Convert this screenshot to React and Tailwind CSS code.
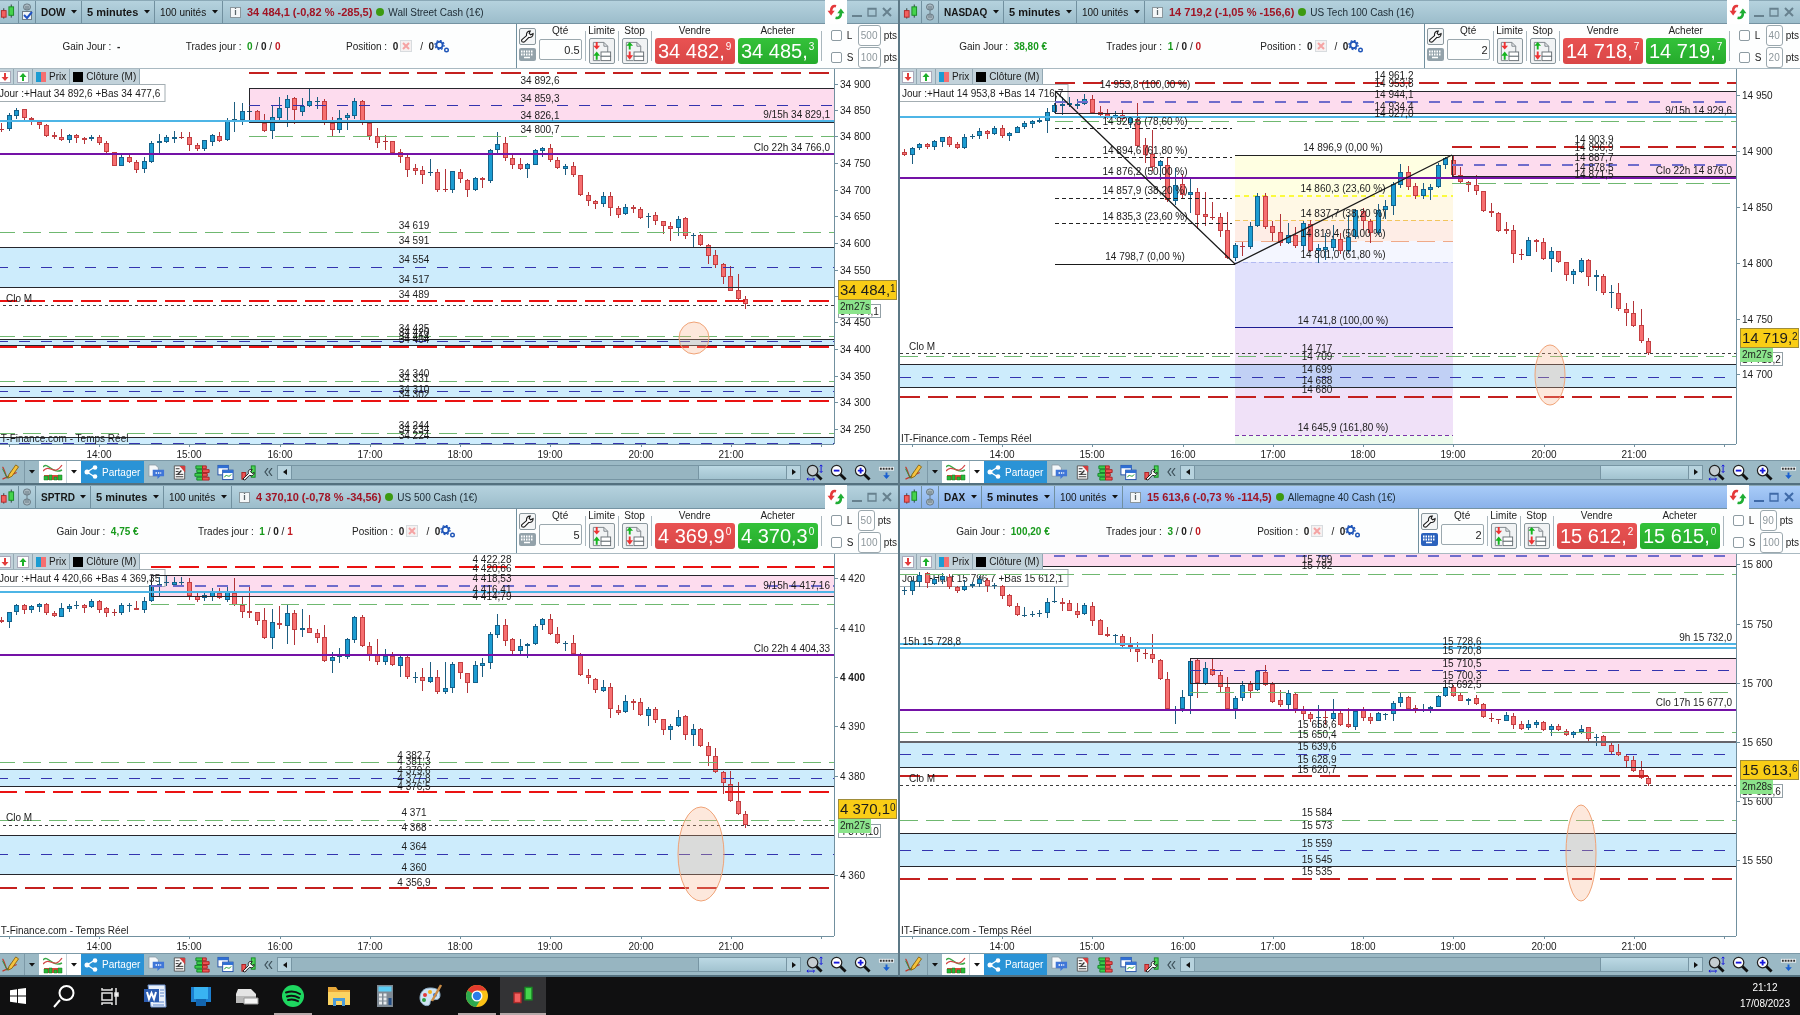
import React from 'react';
import { clsx } from 'clsx';

const STEP = 7.52;
const HOUR = 90.25;

// One entry per 5 minute bar: direction (u/d) then high, body top, body bottom, low
const DOW_BARS = `d54,60,61,63 u44,46,60,62 u39,41,47,50 d40,40,49,52 d48,49,51,56 d52,53,56,60 d55,56,67,68 d63,66,68,70 d60,68,71,72 u65,66,71,74
d65,66,69,74 d68,69,71,75 u66,68,70,72 d66,68,74,76 d72,74,83,84 d83,83,97,97 u86,88,97,97 d86,88,93,94 d91,93,101,104 u88,92,100,104
u72,74,93,94 u65,72,74,84 u66,68,73,74 u62,68,70,74 d63,68,69,70 d63,68,76,82 d74,76,80,82 u71,71,80,82 u65,66,73,77 d63,67,72,73
u49,52,71,72 u33,50,51,63 u34,42,51,56 u42,42,43,43 d41,42,52,54 d45,54,62,63 u37,48,62,70 u28,39,49,51 u26,30,39,58 d28,29,41,55
u29,37,43,47 u19,32,37,38 u28,32,33,40 d30,32,52,56 d48,54,61,67 u41,49,61,64 u44,46,49,61 u29,32,47,50 d31,32,54,56 d51,54,67,71
d59,67,74,79 d66,72,73,81 d72,72,84,85 d80,83,88,94 d86,88,101,108 d95,99,102,106 d97,101,106,115 u90,103,104,107 d100,103,121,123 d100,120,121,123
u102,102,121,124 d100,103,110,114 d110,111,121,128 u108,109,121,122 d108,109,111,119 u80,81,112,114 u63,75,81,84 d68,74,89,92 d85,89,96,100 d89,95,100,101
u94,95,100,109 u80,81,96,96 u78,79,82,88 d75,79,91,93 d88,91,99,100 u95,97,100,106 d93,97,106,108 d106,106,126,127 d123,126,132,137 d131,132,135,140
u123,127,135,138 d123,127,139,147 d137,139,146,149 u135,138,145,146 d136,138,140,144 d138,140,149,150 u144,147,148,159 d143,146,152,156 d152,152,157,165 d153,157,160,172
u147,150,159,167 d148,149,167,170 u164,166,167,178 d165,166,176,177 d175,176,187,195 d181,186,196,199 d194,195,208,215 d197,207,222,222 d205,221,230,233 d227,230,235,240`;

const SP_BARS = `d63,66,68,69 u58,58,68,74 u50,51,58,61 d50,51,56,60 u51,52,56,59 u49,50,53,58 d49,50,59,61 d57,59,62,63 u49,54,63,63 u50,52,55,58
u47,51,52,55 d50,51,54,59 u45,47,53,54 d46,47,56,59 d53,54,59,63 d55,58,59,62 u49,51,59,61 u49,51,52,58 d47,54,56,56 u43,47,56,59
u21,31,47,48 u23,30,31,42 u22,28,29,32 u23,28,31,33 u23,28,29,31 d24,28,42,46 d39,42,46,48 u39,41,44,47 u34,38,43,47 d34,39,44,45
u33,38,46,48 d24,39,51,52 d42,51,58,64 d33,57,59,64 d58,58,67,71 d54,66,84,85 u55,68,84,95 d52,69,71,75 u51,59,72,90 d56,59,76,91
u55,74,76,83 d61,74,79,79 d75,79,84,89 d71,83,107,108 u98,103,107,119 u94,102,103,109 u84,85,103,105 u62,63,86,89 d61,63,92,93 d88,92,101,107
d85,101,108,111 u95,102,108,111 d98,102,111,112 u102,103,112,123 d102,103,123,125 u118,123,124,129 d114,123,127,137 u108,123,128,129 d116,123,138,140 u108,134,138,140
u108,110,134,139 d108,108,119,125 d119,119,129,139 u107,111,129,129 u104,109,112,123 u78,80,109,115 u60,71,81,84 d65,71,87,92 d84,85,97,100 u85,92,97,100
u89,90,92,104 u70,72,90,91 u64,65,71,76 d60,65,80,81 d73,80,89,90 u87,89,90,97 d81,89,100,100 d99,100,121,122 d115,121,124,130 d124,125,136,139
u126,133,137,138 d129,133,155,164 d151,156,159,161 u141,147,158,159 d145,147,149,156 d144,148,161,162 u153,155,162,172 d153,155,166,169 d165,165,176,181 u170,172,176,186
u156,163,172,173 d161,162,181,186 u170,175,181,192 d174,175,192,193 d188,192,202,212 d194,202,218,219 d217,218,229,240 d217,230,247,248 d228,247,260,261 d257,260,271,274`;

const NASDAQ_BARS = `d80,83,86,87 u78,79,86,95 u74,75,79,81 d74,75,78,80 u71,72,78,81 u68,68,73,78 d67,68,76,78 d73,75,79,80 u65,68,79,80 u65,67,68,70
u59,62,67,70 d61,62,65,70 u57,59,65,66 d56,59,67,69 u63,64,67,72 u57,58,64,64 u52,54,58,60 u51,52,55,59 u48,51,53,54 u39,43,52,64
u34,36,43,44 u28,35,37,46 u28,34,36,38 u30,35,37,40 u25,30,35,36 d26,30,44,45 d37,43,46,48 d40,45,48,50 u42,46,49,50 d41,46,50,53
u47,48,54,59 d34,50,77,78 d69,76,86,94 d61,85,98,102 u91,92,97,111 d88,96,131,133 u99,116,132,136 d105,115,126,130 u109,123,126,144 d119,123,146,160
d123,145,148,157 d133,148,149,151 d144,148,162,168 d143,161,189,190 u174,176,189,192 d173,177,178,187 u153,157,178,180 u124,127,157,158 d124,127,158,160 d152,157,164,172
d145,163,174,177 u154,166,174,175 d158,166,177,179 u152,154,177,182 d151,155,182,183 u175,179,182,194 u164,178,181,191 u156,170,179,182 d164,170,182,185 u146,168,182,184
u140,141,168,170 d139,142,152,161 d150,152,164,174 u135,141,164,166 u131,137,141,150 u113,115,137,146 u95,103,116,119 d97,103,118,121 d114,117,127,130 u114,120,127,130
u115,118,121,131 u94,96,118,119 u88,89,96,100 d86,91,106,109 d98,106,113,114 d112,113,116,123 d106,116,122,126 d122,122,142,143 d134,142,144,148 d143,144,162,163
d153,160,162,165 d156,161,185,194 d180,185,186,191 u168,171,187,187 d170,171,173,183 d169,173,190,191 u178,182,190,203 d182,182,193,194 d193,193,206,212 u200,202,206,215
u189,191,203,204 d190,191,208,217 u201,206,208,222 d205,207,224,226 u216,223,224,239 d214,224,240,242 d234,240,244,257 d232,244,257,258 d240,256,272,274 d269,272,284,286`;

const DAX_BARS = `u33,36,37,41 u26,27,37,41 u18,21,28,33 d18,19,29,34 u23,25,30,31 u19,22,26,30 d20,23,33,35 d32,33,37,39 u26,32,36,37 u28,30,32,34
u22,25,30,33 d24,26,32,38 u29,31,32,35 d31,32,42,45 d40,41,52,53 d49,52,61,62 u53,61,62,63 u57,60,61,63 u56,59,60,63 u44,48,59,64
u33,47,48,49 d44,48,50,57 d46,49,57,57 d49,57,61,64 u49,51,60,61 d48,52,67,72 d65,66,81,81 d73,80,82,83 u80,81,82,89 d80,82,92,94
d83,91,93,98 d88,95,98,108 d95,99,100,105 d80,100,105,109 d105,106,125,126 d118,125,155,156 u152,156,156,170 u136,143,155,158 u106,107,142,160 d105,106,129,144
u108,114,130,131 d105,115,121,122 d118,121,133,138 d123,133,155,155 u142,144,155,165 u127,131,144,147 d127,130,137,144 u116,117,136,137 d111,118,131,132 d128,130,148,149
d136,146,151,153 u136,139,151,157 d138,140,155,159 d152,156,160,166 d158,160,165,168 u151,163,164,174 d156,163,164,171 u145,159,165,167 d156,159,171,172 d154,170,173,174
u157,157,173,176 d153,156,164,167 d159,163,167,170 u158,159,167,167 u159,160,161,166 u147,149,160,167 u138,143,149,153 d142,143,155,157 d151,154,155,159 u150,155,156,158
u152,153,155,159 u141,142,153,153 u133,133,142,143 d131,133,142,143 d139,141,147,147 u144,145,147,151 d141,144,150,151 d149,150,163,164 d159,164,165,168 d165,165,166,170
u158,161,167,167 d159,162,171,175 d167,170,175,176 u166,170,174,176 u166,168,171,174 d167,168,176,177 u170,172,176,182 d170,172,176,177 d175,177,181,182 u177,178,181,184
u171,175,178,180 d173,173,185,187 u180,183,184,192 d181,182,192,192 d189,191,198,200 d190,198,201,202 d201,202,207,213 d202,206,217,218 d207,216,224,225 d222,224,230,232`;

const LINE = {
  red: { stroke: '#c4201f', strokeWidth: 2, strokeDasharray: '20 8' },
  hot: { stroke: '#ea1212', strokeWidth: 2, strokeDasharray: '20 8' },
  green: { stroke: '#6fb870', strokeWidth: 1, strokeDasharray: '18 8' },
  mid: { stroke: '#3434ae', strokeWidth: 1, strokeDasharray: '11 11' },
  midThick: { stroke: '#6f6ccb', strokeWidth: 2, strokeDasharray: '11 11' },
  black: { stroke: '#26262c', strokeWidth: 1 },
  grey: { stroke: '#65656b', strokeWidth: 2 },
  sky: { stroke: '#4eb5e6', strokeWidth: 2 },
  purple: { stroke: '#7412a6', strokeWidth: 2 },
  dots: { stroke: '#3c3c3c', strokeWidth: 1, strokeDasharray: '3 3' },
  fib: { stroke: '#222', strokeWidth: 1, strokeDasharray: '4 3' },
};

const PINK = '#fddcee';
const BLUE = '#cdecfc';

const WINDOWS = [
  {
    symbol: 'DOW', last: '34 484,1 (-0,82 % -285,5)', name: 'Wall Street Cash (1€)', linked: true,
    gain: '-', trades: [0, 0, 0], qty: '0.5', sell: ['34 482,', '9'], buy: ['34 485,', '3'],
    limit: '500', stop: '100', bars: DOW_BARS, height: 375,
    day: 'Jour :+Haut 34 892,6 +Bas 34 477,6',
    zones: [[252, 19, 53, PINK], [0, 178, 218, BLUE], [0, 270, 276, BLUE], [0, 317, 328, BLUE], [0, 368, 375, BLUE]],
    boxes: [[252, 19, 53]],
    lines: [['red', 4, 252], ['mid', 36, 252], ['green', 67, 252], ['sky', 52], ['purple', 85], ['green', 163],
      ['black', 178], ['mid', 198], ['black', 218], ['hot', 232], ['dots', 236], ['green', 267], ['black', 270], ['mid', 272],
      ['hot', 278], ['black', 276], ['green', 312], ['black', 317], ['mid', 322], ['black', 328], ['hot', 332], ['green', 364],
      ['black', 368], ['mid', 374]],
    labels: [[543, 11, '34 892,6'], [543, 29, '34 859,3'], [543, 46, '34 826,1'], [543, 60, '34 800,7'],
      [417, 156, '34 619'], [417, 171, '34 591'], [417, 190, '34 554'], [417, 210, '34 517'], [417, 225, '34 489'],
      [417, 259, '34 425'], [417, 263, '34 420'], [417, 267, '34 414'], [417, 270, '34 404'],
      [417, 304, '34 340'], [417, 309, '34 331'], [417, 320, '34 310'], [417, 325, '34 302'],
      [417, 356, '34 244'], [417, 360, '34 234'], [417, 366, '34 224']],
    edge: [[45, '9/15h 34 829,1'], [78, 'Clo 22h 34 766,0']],
    closeY: 229,
    scale: [['34 900', 15], ['34 850', 41], ['34 800', 67], ['34 750', 94], ['34 700', 121], ['34 650', 147], ['34 600', 174],
      ['34 550', 201], ['', 227], ['34 450', 253], ['34 400', 280], ['34 350', 307], ['34 300', 333], ['34 250', 360]],
    tag: ['34 484,', '1', 221], timer: ['2m27s', 238], closeTag: ['34 484,1', 242],
    target: [697, 269, 15, 16],
  },
  {
    symbol: 'NASDAQ', last: '14 719,2 (-1,05 % -156,6)', name: 'US Tech 100 Cash (1€)',
    gain: '38,80 €', trades: [1, 0, 0], qty: '2', sell: ['14 718,', '7'], buy: ['14 719,', '7'],
    limit: '40', stop: '20', bars: NASDAQ_BARS, height: 375,
    day: 'Jour :+Haut 14 953,8 +Bas 14 716,7',
    zones: [[155, 22, 44, PINK], [552, 86, 107, PINK], [0, 295, 318, BLUE]],
    boxes: [[155, 22, 44], [552, 86, 107]],
    fib: true,
    lines: [['red', 14, 155], ['midThick', 33, 155], ['green', 52, 155], ['sky', 48], ['red', 78, 552], ['midThick', 96, 552],
      ['green', 114, 552], ['purple', 109], ['dots', 284], ['green', 287], ['black', 295], ['mid', 308], ['black', 318], ['red', 328]],
    labels: [[494, 6, '14 961,2'], [494, 14, '14 953,8'], [494, 25, '14 944,1'], [494, 37, '14 934,4'], [494, 44, '14 927,0'],
      [694, 70, '14 903,9'], [694, 78, '14 896,9'], [694, 88, '14 887,7'], [694, 98, '14 878,5'], [694, 105, '14 871,5'],
      [245, 15, '14 953,8 (100,00 %)'], [245, 52, '14 920,6 (78,60 %)'], [245, 81, '14 894,6 (61,80 %)'],
      [245, 102, '14 876,2 (50,00 %)'], [245, 121, '14 857,9 (38,20 %)'], [245, 147, '14 835,3 (23,60 %)'], [245, 187, '14 798,7 (0,00 %)'],
      [443, 78, '14 896,9 (0,00 %)'], [443, 119, '14 860,3 (23,60 %)'], [443, 144, '14 837,7 (38,20 %)'], [443, 164, '14 819,4 (50,00 %)'],
      [443, 185, '14 801,0 (61,80 %)'], [443, 251, '14 741,8 (100,00 %)'], [443, 358, '14 645,9 (161,80 %)'],
      [417, 279, '14 717'], [417, 287, '14 709'], [417, 300, '14 699'], [417, 311, '14 688'], [417, 320, '14 680']],
    edge: [[41, '9/15h 14 929,6'], [101, 'Clo 22h 14 876,0']],
    closeY: 277,
    scale: [['14 950', 26], ['14 900', 82], ['14 850', 138], ['14 800', 194], ['14 750', 250], ['14 700', 305]],
    tag: ['14 719,', '2', 269], timer: ['2m27s', 286], closeTag: ['14 719,2', 290],
    target: [650, 306, 15, 30],
  },
  {
    symbol: 'SPTRD', last: '4 370,10 (-0,78 % -34,56)', name: 'US 500 Cash (1€)',
    gain: '4,75 €', trades: [1, 0, 1], qty: '5', sell: ['4 369,9', '0'], buy: ['4 370,3', '0'],
    limit: '50', stop: '100', bars: SP_BARS, height: 382,
    day: 'Jour :+Haut 4 420,66 +Bas 4 369,35',
    zones: [[154, 21, 42, PINK], [0, 215, 232, BLUE], [0, 281, 320, BLUE]],
    boxes: [[154, 21, 42]],
    lines: [['hot', 13, 154], ['midThick', 32, 154], ['green', 50, 154], ['sky', 38], ['purple', 101], ['green', 208],
      ['black', 215], ['mid', 224], ['black', 232], ['hot', 238], ['green', 266], ['dots', 271], ['black', 281], ['mid', 300],
      ['black', 320], ['red', 334]],
    labels: [[495, 5, '4 422,28'], [495, 14, '4 420,66'], [495, 24, '4 418,53'], [495, 35, '4 416,41'], [495, 42, '4 414,79'],
      [417, 201, '4 382,7'], [417, 207, '4 381,3'], [417, 216, '4 379,6'], [417, 224, '4 377,8'], [417, 232, '4 376,5'],
      [417, 258, '4 371'], [417, 273, '4 368'], [417, 292, '4 364'], [417, 313, '4 360'], [417, 328, '4 356,9']],
    edge: [[31, '9/15h 4 417,16'], [94, 'Clo 22h 4 404,33']],
    closeY: 263,
    scale: [['4 420', 24], ['4 410', 74], ['4 400', 123], ['4 390', 172], ['4 380', 222], ['4 360', 321]],
    tag: ['4 370,1', '0', 255], timer: ['2m27s', 272], closeTag: ['4 370,10', 277],
    target: [704, 300, 23, 47],
  },
  {
    symbol: 'DAX', last: '15 613,6 (-0,73 % -114,5)', name: 'Allemagne 40 Cash (1€)', active: true,
    gain: '100,20 €', trades: [3, 0, 0], qty: '2', sell: ['15 612,', '2'], buy: ['15 615,', '0'],
    limit: '90', stop: '100', bars: DAX_BARS, height: 382,
    day: 'Jour :+Haut 15 796,7 +Bas 15 612,1',
    zones: [[0, 0, 12, PINK], [290, 104, 129, PINK], [0, 188, 213, BLUE], [0, 279, 312, BLUE]],
    boxes: [[290, 104, 129]],
    lines: [['midThick', 2], ['black', 12], ['green', 20], ['sky', 90], ['sky', 94], ['mid', 116, 290], ['green', 138, 290],
      ['purple', 156], ['green', 178], ['grey', 188], ['mid', 200], ['black', 213], ['red', 222], ['dots', 231], ['green', 266],
      ['black', 279], ['mid', 296], ['black', 312], ['red', 325]],
    labels: [[417, 5, '15 799'], [417, 11, '15 792'], [562, 87, '15 728,6'], [562, 96, '15 720,8'], [562, 109, '15 710,5'],
      [562, 121, '15 700,3'], [562, 130, '15 692,5'], [417, 170, '15 658,6'], [417, 180, '15 650,4'], [417, 192, '15 639,6'],
      [417, 205, '15 628,9'], [417, 215, '15 620,7'], [417, 258, '15 584'], [417, 271, '15 573'], [417, 289, '15 559'],
      [417, 305, '15 545'], [417, 317, '15 535'], [32, 87, '15h 15 728,8']],
    edge: [[83, '9h 15 732,0'], [148, 'Clo 17h 15 677,0']],
    closeY: 224,
    scale: [['15 800', 10], ['15 750', 70], ['15 700', 129], ['15 650', 188], ['15 600', 247], ['15 550', 306]],
    tag: ['15 613,', '6', 216], timer: ['2m28s', 233], closeTag: ['15 613,6', 237],
    target: [681, 299, 15, 48],
  },
];

const FIB_BANDS = [
  [86, 127, '#ffffe2'], [127, 151, '#fff8e5'], [151, 172, '#feede6'], [172, 193, '#f4f6ff'],
  [193, 258, '#e1e1fc'], [258, 366, '#f0e1f8'], [366, 375, '#edfbed'],
];

const CandleIcon = ({ className }) => (
  <svg viewBox="0 0 16 16" className={className}>
    <path d="M4 4v11M12 0v14" stroke="#2c3a35" />
    <rect x="1.5" y="6.500" width="5" height="7" fill="#f2605f" stroke="#b12a2a" />
    <rect x="9.500" y="2.500" width="5" height="9" fill="#45d34c" stroke="#188a24" />
  </svg>
);

const Caret = () => (
  <svg viewBox="0 0 6 4" className="w-[6px] h-[4px] shrink-0"><path d="M0 0h6L3 3.500z" fill="#111" /></svg>
);

const LinkIcon = ({ linked }) => (
  <svg viewBox="0 0 12 18" className="w-3 h-[18px]" fill="none" stroke="#6b7c86">
    <rect x="2.500" y="1" width="7" height="6" rx="3" fill="#a9b8c0" />
    <path d="M5 3v4M7 3v4" />
    {linked ? (
      <>
        <rect x="1.500" y="8.500" width="9" height="8" fill="#eef4f8" />
        <path d="M3 12l3 3 5-6" stroke="#2053c4" strokeWidth="2" />
      </>
    ) : (
      <>
        <rect x="2.500" y="11" width="7" height="6" rx="3" fill="#a9b8c0" />
        <path d="M5 11v4M7 11v4M6 7v4" />
      </>
    )}
  </svg>
);

const WrenchIcon = () => (
  <svg viewBox="0 0 14 14" className="w-[13px] h-[13px]">
    <path d="M2 13a1.600 1.600 0 0 1-1-2.600L6 6C5.500 3 7.500 1 10 1.200L8.800 3.600l1.600 1.600L13 4c.2 2.500-1.800 4.400-4.500 4L4 12.500A2 2 0 0 1 2 13z" fill="#fff" stroke="#1c1c1c" strokeWidth="1.200" />
  </svg>
);

const OrderIcon = ({ flip }) => (
  <svg viewBox="0 0 24 24" className="w-[23px] h-[23px]" fill="none">
    <path d="M3.500 2.500h11l4 4v10M14.500 2.500v4h4M3.500 2.500v19h7" stroke="#7d858a" />
    <rect x="11.500" y="12.500" width="10" height="4.500" fill="#fff" stroke="#6a7277" />
    <rect x="11.500" y="17" width="10" height="4.500" fill="#fff" stroke="#6a7277" />
    <path d={flip ? 'M6 10V6H3.500L7 2l3.500 4H8v4z' : 'M6 2v4H3.500L7 10l3.500-4H8V2z'} fill={flip ? '#15b51e' : '#e33'} />
    <path d={flip ? 'M6 12v4H3.500L7 20.500l3.500-4.500H8v-4z' : 'M6 20.500v-4H3.500L7 12l3.500 4.500H8v4z'} fill={flip ? '#e33' : '#15b51e'} />
  </svg>
);

const RefreshIcon = () => (
  <svg viewBox="0 0 20 18" className="w-[18px] h-4" fill="none">
    <path d="M10 2.500C6.500 1.500 4.500 4 4.500 8" stroke="#e5393b" strokeWidth="3" />
    <path d="M.5 7.500h8l-4 5.500z" fill="#e5393b" />
    <path d="M9.500 15.500c4 1 6-1.500 6-5.500" stroke="#1fae34" strokeWidth="3" />
    <path d="M11.500 10.500h8l-4-5.500z" fill="#1fae34" />
  </svg>
);

const GearsIcon = () => (
  <svg viewBox="0 0 16 13" className="w-4 h-[13px]" fill="none" stroke="#1f55b8">
    <circle cx="5.500" cy="5" r="3.200" strokeWidth="2" />
    <circle cx="5.500" cy="5" r="4.600" strokeWidth="1.200" strokeDasharray="1.800 1.800" />
    <circle cx="12.500" cy="10" r="1.800" strokeWidth="1.400" />
  </svg>
);

const Picker = ({ label, value, className }) => (
  <label className="h-full flex items-center gap-[5px] pl-[5px] pr-1 border-r border-[#71909f]">
    <select aria-label={label} className={clsx('appearance-none bg-transparent outline-none text-[#161616]', className)}>
      <option>{value}</option>
    </select>
    <Caret />
  </label>
);

const TitleBar = ({ win }) => (
  <div
    className={clsx(
      'h-6 flex items-center border-y border-t-[#8ba9b7] border-b-[#7593a2] bg-gradient-to-b',
      win.active ? 'from-[#a9ccf8] to-[#8ab2ea]' : 'from-[#b5d2de] to-[#9cbdcb]'
    )}
  >
    <span className="w-[22px] h-full flex items-center justify-center border-r border-[#71909f]"><CandleIcon className="w-[15px] h-4" /></span>
    <button aria-label="Lier" className="w-[17px] h-full flex items-center justify-center border-r border-[#71909f]"><LinkIcon linked={win.linked} /></button>
    <Picker label="Valeur" value={win.symbol} className="font-bold" />
    <Picker label="Unité de temps" value="5 minutes" className="font-bold text-[11px]" />
    <Picker label="Historique" value="100 unités" />
    <span className="ml-[7px] mr-[6px] w-[11px] h-[11px] bg-[#f4f7f8] border border-[#8b979d] text-[#5b666b] text-[9px] leading-[9px] font-bold text-center">i</span>
    <span className="font-bold text-[11px] text-[#a01424] whitespace-nowrap">{win.last}</span>
    <span className="mx-1 w-2 h-2 rounded-full bg-[#3c9a10]" />
    <span className="text-[#1c2a33] whitespace-nowrap">{win.name}</span>
    <div className="ml-auto h-6 flex items-center">
      <button aria-label="Actualiser" className="w-[22px] h-6 bg-white flex items-center justify-center"><RefreshIcon /></button>
      <div className={clsx('flex items-center gap-[5px] pl-[5px] pr-[6px]', win.active ? 'text-[#3f6aa8]' : 'text-[#67818e]')}>
        <button aria-label="Réduire"><svg viewBox="0 0 10 10" className="size-[10px]"><path d="M0 9h10" stroke="currentColor" strokeWidth="2" /></svg></button>
        <button aria-label="Agrandir"><svg viewBox="0 0 10 10" className="size-[10px]"><path d="M1 1.500h8v7.500H1zM1 2h8" fill="none" stroke="currentColor" strokeWidth="1.300" /></svg></button>
        <button aria-label="Fermer"><svg viewBox="0 0 10 10" className="size-[10px]"><path d="M1 1l8 8M9 1L1 9" stroke="currentColor" strokeWidth="2" /></svg></button>
      </div>
    </div>
  </div>
);

const Divider = () => <span className="w-px h-[30px] mt-[7px] bg-[#aab7be]" />;

const PriceButton = ({ label, price, className }) => (
  <div className="flex flex-col items-center">
    <span className="h-[14px] leading-[14px]">{label}</span>
    <button className={clsx('w-20 h-[26px] rounded-[3px] text-white text-[20px] leading-[26px] flex justify-center', className)}>
      {price[0]}<sup className="text-[10px] leading-[18px] top-0 ml-px">{price[1]}</sup>
    </button>
  </div>
);

const Protection = ({ letter, value }) => (
  <div className="flex items-center gap-[5px]">
    <label className="flex items-center gap-[5px]">
      <input type="checkbox" className="appearance-none size-[11px] border border-[#8d9ba2] rounded-[2px] bg-white" />
      <span className="w-[6px]">{letter}</span>
    </label>
    <input
      aria-label={`${letter} points`}
      defaultValue={value}
      className={clsx('h-[21px] border border-[#9ba8ae] rounded-[3px] text-center text-[#8d979c] bg-white', value.length > 2 ? 'w-[23px]' : 'w-[17px]')}
    />
    <span className="-ml-[2px]">pts</span>
  </div>
);

const TradeBar = ({ win }) => {
  const [won, flat, lost] = win.trades;
  return (
    <div className="h-[45px] flex border-b border-[#a9b9c1] bg-[#fdfefe] text-[#222]">
      <div className="flex-1 flex items-center justify-evenly py-2 whitespace-nowrap">
        <span>Gain Jour : &nbsp;<b className={win.gain === '-' ? '' : 'text-[#189a1c]'}>{win.gain}</b></span>
        <span>
          Trades jour : &nbsp;<b className="text-[#189a1c]">{won}</b> / <b>{flat}</b> / <b className="text-[#c01a22]">{lost}</b>
        </span>
        <span className="flex items-center">
          Position : &nbsp;<b>0</b>
          <button aria-label="Fermer position" className="mx-[2px] size-[12px] border border-[#d8dcdf] bg-[#f5f1f1] flex items-center justify-center">
            <svg viewBox="0 0 8 8" className="size-2"><path d="M1 1l6 6M7 1L1 7" stroke="#f5a3a3" strokeWidth="2" /></svg>
          </button>
          <span className="ml-[6px]">/ &nbsp;<b>0</b></span>
          <GearsIcon />
        </span>
      </div>
      <div className="flex gap-[3px] pl-[2px] pr-px border-l border-[#71909f]">
        <div className="flex flex-col gap-[3px] pt-1">
          <button aria-label="Réglages" className="size-[17px] border border-[#8a979d] rounded-[2px] bg-[#f4f6f7] flex items-center justify-center"><WrenchIcon /></button>
          <button aria-label="Clavier" className={clsx('w-[17px] h-[13px] rounded-[2px] flex items-center justify-center', win.active ? 'bg-[#2b62bd]' : 'bg-[#93a2aa]')}>
            <svg viewBox="0 0 14 9" className="w-[14px] h-[9px]"><path d="M1 1.500h12M1 4.500h12" stroke="#fff" strokeWidth="2" strokeDasharray="1.500 1" /><path d="M4 7.500h6" stroke="#fff" strokeWidth="1.500" /></svg>
          </button>
        </div>
        <label className="flex flex-col items-center">
          <span className="h-[15px] leading-[14px]">Qté</span>
          <input defaultValue={win.qty} className="w-[43px] h-[21px] border border-[#9ba8ae] rounded-[2px] text-right pr-px text-[11px]" />
        </label>
        <Divider />
        <div className="flex flex-col items-center w-[26px]">
          <span className="h-[14px] leading-[14px]">Limite</span>
          <button aria-label="Ordre limite" className="size-[26px] border border-[#8a979d] rounded-[2px] bg-[#f1f3f4] flex items-center justify-center"><OrderIcon /></button>
        </div>
        <Divider />
        <div className="flex flex-col items-center w-[26px]">
          <span className="h-[14px] leading-[14px]">Stop</span>
          <button aria-label="Ordre stop" className="size-[26px] border border-[#8a979d] rounded-[2px] bg-[#f1f3f4] flex items-center justify-center"><OrderIcon flip /></button>
        </div>
        <Divider />
        <PriceButton label="Vendre" price={win.sell} className="bg-gradient-to-b from-[#e95252] to-[#d94747]" />
        <PriceButton label="Acheter" price={win.buy} className="bg-gradient-to-b from-[#34c23a] to-[#25ab2c]" />
        <Divider />
        <div className="pl-[6px] pt-px flex flex-col gap-px">
          <Protection letter="L" value={win.limit} />
          <Protection letter="S" value={win.stop} />
        </div>
      </div>
    </div>
  );
};

const Fibonacci = () => (
  <g>
    {FIB_BANDS.map(([top, bottom, fill]) => (
      <rect key={top} x="335" y={top} width="218" height={bottom - top} fill={fill} />
    ))}
    <g strokeWidth="1">
      <path d="M335 86.500h218" stroke="#222" />
      <path d="M335 127h218" stroke="#fbfb3c" strokeWidth="2" strokeDasharray="5 4" />
      <path d="M335 151.500h218" stroke="#f2c55c" strokeDasharray="5 3" />
      <path d="M335 172.500h218" stroke="#efa988" strokeDasharray="18 8" />
      <path d="M335 193.500h218" stroke="#b3baf2" strokeDasharray="5 3" />
      <path d="M335 258.500h218" stroke="#1c1c92" />
      <path d="M335 366.500h218" stroke="#7a35a8" strokeDasharray="4 3" />
    </g>
  </g>
);

const FibLines = () => (
  <g fill="none">
    <path d="M155 59.500h177M155 88.500h177M155 129.500h177M155 154.500h177" {...LINE.fib} />
    <path d="M155 195.500h180" stroke="#1a1a1a" />
    <path d="M155 22l180 173 217-109" stroke="#1a1a1a" strokeWidth="1.300" />
  </g>
);

const Candles = ({ bars }) => (
  <g>
    {bars.split(/\s+/).map((bar, i) => {
      const up = bar[0] === 'u';
      const [high, top, bottom, low] = bar.slice(1).split(',').map(Number);
      const x = Math.round(2 + i * STEP);
      return (
        <g key={i}>
          <rect x={x + 2} y={high} width="1" height={Math.max(low - high, 1)} fill={up ? '#1d5d80' : '#b23338'} />
          {bottom - top < 2 ? (
            <rect x={x} y={top} width="5" height="1" fill={up ? '#1d5d80' : '#b23338'} />
          ) : (
            <rect x={x + 0.5} y={top + 0.5} width="4" height={bottom - top - 1} fill={up ? '#1c9cd2' : '#f66f70'} stroke={up ? '#14618a' : '#c43f42'} />
          )}
        </g>
      );
    })}
  </g>
);

const Plot = ({ win }) => {
  const { height } = win;
  const [cx, cy, rx, ry] = win.target;
  return (
    <svg className="flex-1 min-w-0 block" height={height + (height > 380 ? 17 : 16)} fontSize="10" fill="#1c1c1c">
      {win.zones.map(([x, top, bottom, fill]) => (
        fill === PINK && <rect key={top} x={x} y={top} width="100%" height={bottom - top} fill={fill} />
      ))}
      {win.fib && <Fibonacci />}
      {win.zones.map(([x, top, bottom, fill]) => (
        fill === BLUE && <rect key={top} x={x} y={top} width="100%" height={bottom - top} fill={fill} className="mix-blend-multiply" />
      ))}
      <rect x="-1" y="15.500" width="169" height="17" fill="#fff" stroke="#a3adb2" />
      <text x="2" y="28">{win.day}</text>
      <Candles bars={win.bars} />
      {win.boxes.map(([x, top, bottom]) => (
        <rect key={top} x={x + 0.5} y={top + 0.5} width="100%" height={bottom - top} fill="none" stroke="#26262c" />
      ))}
      {win.lines.map(([kind, y, x = 0]) => {
        const at = LINE[kind].strokeWidth === 1 ? y + 0.5 : y;
        return <line key={kind + y} x1={x} x2="100%" y1={at} y2={at} {...LINE[kind]} />;
      })}
      {win.fib && <FibLines />}
      <ellipse cx={cx} cy={cy} rx={rx} ry={ry} fill="#f7b48c" fillOpacity="0.3" stroke="#f0a377" />
      <g textAnchor="middle">
        {win.labels.map(([x, y, text]) => <text key={x + text} x={x} y={y + 4}>{text}</text>)}
      </g>
      <svg x="100%" overflow="visible">
        {win.edge.map(([y, text]) => <text key={text} x="-4" y={y + 4} textAnchor="end">{text}</text>)}
      </svg>
      <text x="9" y={win.closeY + 4}>Clo M</text>
      <text x="1" y={height - 2}>IT-Finance.com - Temps Réel</text>
      <rect y={height} width="100%" height="20" fill="#fff" />
      <line x1="0" x2="100%" y1={height + 0.5} y2={height + 0.5} stroke="#71909f" />
      {[-1, 0, 1, 2, 3, 4, 5, 6, 7, 8].map((h) => {
        const x = Math.round(102 + h * HOUR);
        return (
          <g key={h}>
            <line x1={x + 0.5} x2={x + 0.5} y1={height} y2={height + 3} stroke="#71909f" />
            {h >= 0 && h < 8 && <text x={x} y={height + 14} textAnchor="middle">{14 + h}:00</text>}
          </g>
        );
      })}
    </svg>
  );
};

const PriceScale = ({ win }) => {
  const [price, digit, y] = win.tag;
  const [timer, timerY] = win.timer;
  const [closing, closingY] = win.closeTag;
  return (
    <svg className="w-16 shrink-0 block" height={win.height + 16} fontSize="10" fill="#1c1c1c">
      <line x1="0.500" x2="0.500" y1="0" y2={win.height} stroke="#71909f" />
      {win.scale.map(([text, at]) => (
        <g key={at}>
          <line x1="0" x2="4" y1={at + 0.5} y2={at + 0.5} stroke="#71909f" />
          <text x="6" y={at + 4} fontWeight={text === '4 400' ? 'bold' : 'normal'}>{text}</text>
        </g>
      ))}
      <rect x="4.500" y={closingY - 6.5} width="42" height="13" fill="#fff" stroke="#93a0a6" />
      <text x="6" y={closingY + 4}>{closing}</text>
      <rect x="4.500" y={y - 9.5} width="58" height="19" fill="#f9cd16" stroke="#a08d3a" />
      <text x="6" y={y + 5} fontSize="15">{price}</text>
      <text x="56" y={y + 2} fontSize="10">{digit}</text>
      <rect x="4" y={timerY - 7} width="33" height="14" fill="#8be48b" />
      <text x="6" y={timerY + 3}>{timer}</text>
    </svg>
  );
};

const Legend = () => (
  <div className="absolute top-0 left-0 h-4 flex items-stretch bg-[#c2d2da] text-[#1c1c1c] border-b border-[#9fb2bc]">
    <button aria-label="Réduire le graphique" className="w-[17px] flex items-center justify-center border-r border-[#93a8b3]">
      <svg viewBox="0 0 12 12" className="size-3"><rect x=".5" y=".5" width="11" height="11" fill="#fff" stroke="#aab" /><path d="M5 2h2v4h2.500L6 10 2.500 6H5z" fill="#e23b3b" /></svg>
    </button>
    <button aria-label="Agrandir le graphique" className="w-[19px] flex items-center justify-center border-r border-[#93a8b3]">
      <svg viewBox="0 0 12 12" className="size-3"><rect x=".5" y=".5" width="11" height="11" fill="#fff" stroke="#aab" /><path d="M5 10h2V6h2.500L6 2 2.500 6H5z" fill="#1eb02a" /></svg>
    </button>
    <button className="px-[3px] flex items-center gap-[3px] border-r border-[#93a8b3]">
      <span className="w-[5px] h-[10px] bg-[#1c9cd2]" /><span className="-ml-[3px] w-[5px] h-[10px] bg-[#f66f70]" />Prix
    </button>
    <button className="px-[3px] flex items-center gap-[3px] border-r border-[#93a8b3]">
      <span className="size-[10px] bg-black" />Clôture (M)
    </button>
  </div>
);

const Magnifier = ({ sign }) => (
  <svg viewBox="0 0 18 18" className="size-[17px]" fill="none">
    <path d="M10.500 10.500l6 6" stroke="#111" strokeWidth="3" />
    <circle cx="7" cy="7" r="5.500" fill={sign ? '#fff' : '#c4ccd0'} stroke="#222" strokeWidth="1.300" />
    {sign === 'minus' && <path d="M4 7h6" stroke="#1717dd" strokeWidth="2" />}
    {sign === 'plus' && <path d="M4 7h6M7 4v6" stroke="#1717dd" strokeWidth="2" />}
    {!sign && <path d="M16 1v8M14.500 2.500L16 1l1.500 1.500M14.500 7.500L16 9l1.500-1.500M1 16h8M2.500 14.500L1 16l1.500 1.500M7.500 14.500L9 16l-1.500 1.500" stroke="#1717dd" />}
  </svg>
);

const tools = [
  ['Commentaires', (
    <>
      <path d="M1 1h7l3 3v9H1z" fill="#f5f8fa" stroke="#8ea0aa" />
      <path d="M5 6h12v7h-4l-3 3v-3H5z" fill="#3f76d8" />
      <path d="M8 9.500h6" stroke="#fff" strokeWidth="1.500" strokeDasharray="1.500 1" />
    </>
  )],
  ['Notes', (
    <>
      <path d="M3.500 2h11v14h-11z" fill="#f8f8f8" stroke="#555" />
      <path d="M5 5h4M5 8h3M5 11h8M5 13.500h8" stroke="#333" />
      <path d="M9 2h6v7z" fill="#d43d3d" />
      <path d="M7 11l4-4" stroke="#333" strokeWidth="1.500" />
    </>
  )],
  ['Carnet', (
    <>
      <path d="M2 2h7v3H2zM3 6h6v3H3zM1 10h8v3H1zM3 14h6v3H3z" fill="#3ed04c" stroke="#14872a" />
      <path d="M9 2h4v3H9zM9 6h7v3H9zM9 10h5v3H9zM9 14h7v3H9z" fill="#f05454" stroke="#a22" />
    </>
  )],
  ['Fenêtres', (
    <>
      <rect x="1" y="1.500" width="11" height="10" fill="#fff" stroke="#2351a8" />
      <path d="M1 3h11" stroke="#2f6fd4" strokeWidth="3" />
      <rect x="6" y="6.500" width="11" height="10" fill="#fff" stroke="#2351a8" />
      <path d="M6 8h11" stroke="#2f6fd4" strokeWidth="3" />
      <path d="M8 14c2-5 4 2 7-3" fill="none" stroke="#1c9a30" />
    </>
  )],
  ['Options', (
    <>
      <rect x="12" y="2" width="4" height="12" fill="#4bd554" stroke="#168a24" />
      <rect x="2" y="9" width="4" height="7" fill="#f05454" stroke="#a22" />
      <path d="M3 16l6-6c-1-3 1-5 4-4l-2 2 2 2 2-1c0 3-2 4-5 3l-5 5z" fill="#fff" stroke="#111" />
    </>
  )],
];

const Toolbar = ({ tall }) => (
  <div className={clsx('flex items-center bg-[#9bb9c5] border-t border-[#7c99a7] border-b-2 border-b-[#54717f]', tall ? 'h-[25px]' : 'h-6')}>
    <button aria-label="Dessiner" className="w-7 h-full flex items-center justify-center border-r border-[#7c99a7]">
      <svg viewBox="0 0 20 18" className="w-[20px] h-[17px]" fill="none">
        <path d="M1 3c2 2 3 8 5 12M1 16L16 9" stroke="#c33a2c" strokeWidth="1.300" />
        <path d="M1 5l5 10 4-7" stroke="#2c8c3c" />
        <path d="M7 15l1-4 7-10 3 2-7 10z" fill="#f6c33c" stroke="#8d6714" />
      </svg>
    </button>
    <button aria-label="Outils de dessin" className="w-[14px] h-full flex items-center justify-center"><Caret /></button>
    <button aria-label="Indicateurs" className="w-7 h-full bg-white flex items-center justify-center border-r border-[#c6d2d8]">
      <svg viewBox="0 0 20 18" className="w-[20px] h-[18px]" fill="none">
        <path d="M0 4C5-2 9 12 19 7" stroke="#3aa848" strokeWidth="1.400" />
        <path d="M0 8c7-8 11 6 19-6" stroke="#d24545" strokeWidth="1.200" />
        <path d="M1 12h18v5H1z" fill="#e04a3a" />
        <path d="M1 13h4v4H1zM6 12h3v5H6zM11 14h3v3h-3zM15 12h4v5h-4z" fill="#29b936" stroke="#167524" strokeWidth=".5" />
      </svg>
    </button>
    <button aria-label="Liste des indicateurs" className="w-[14px] h-full bg-white flex items-center justify-center"><Caret /></button>
    <button className="h-full w-[63px] bg-[#2a93d6] text-white flex items-center gap-1 pl-[3px]">
      <svg viewBox="0 0 14 14" className="size-[14px]"><path d="M11 2L3 7l8 5" stroke="#fff" fill="none" strokeWidth="1.300" /><circle cx="11" cy="2.500" r="2.300" fill="#fff" /><circle cx="3" cy="7" r="2.500" fill="#fff" /><circle cx="11" cy="11.500" r="2.300" fill="#fff" /></svg>
      Partager
    </button>
    <div className="flex items-center gap-[6px] pl-1">
      {tools.map(([label, art]) => (
        <button key={label} aria-label={label}><svg viewBox="0 0 18 18" className="size-[17px]" fill="none">{art}</svg></button>
      ))}
    </div>
    <button aria-label="Replier" className="ml-[7px] mr-1 text-[#3c4f59]">
      <svg viewBox="0 0 9 8" className="w-[9px] h-2"><path d="M4 0L1 4l3 4M8 0L5 4l3 4" fill="none" stroke="currentColor" strokeWidth="1.200" /></svg>
    </button>
    <div className="flex-1 h-[15px] flex border border-[#7795a3] bg-[#97b5c1]">
      <button aria-label="Défiler à gauche" className="w-[14px] bg-[#b7d3de] border-r border-[#7795a3] flex items-center justify-center">
        <svg viewBox="0 0 4 6" className="w-1 h-[6px]"><path d="M4 0v6L0 3z" fill="#111" /></svg>
      </button>
      <span className="ml-auto w-[88px] border-l border-[#7795a3] bg-gradient-to-b from-[#bcd9e4] to-[#a2c3d0]" />
      <button aria-label="Défiler à droite" className="w-[14px] bg-[#b7d3de] border-l border-[#7795a3] flex items-center justify-center">
        <svg viewBox="0 0 4 6" className="w-1 h-[6px]"><path d="M0 0v6l4-3z" fill="#111" /></svg>
      </button>
    </div>
    <div className="flex items-center gap-[7px] pl-[5px] pr-[3px]">
      <button aria-label="Ajuster"><Magnifier /></button>
      <button aria-label="Zoom arrière"><Magnifier sign="minus" /></button>
      <button aria-label="Zoom avant"><Magnifier sign="plus" /></button>
      <button aria-label="Clavier virtuel">
        <svg viewBox="0 0 18 18" className="size-[17px]"><path d="M1 3h16v4H1z" fill="#eef3f5" /><path d="M2 5h14" stroke="#333" strokeWidth="2" strokeDasharray="2 1" /><path d="M8 9h2v3h2.500L9 16l-3.500-4H8z" fill="#1a5fd0" /></svg>
      </button>
    </div>
  </div>
);

const ChartWindow = ({ win, left }) => (
  <section className={clsx('min-w-0 bg-white', left && 'border-r-2 border-[#5c7886]')}>
    <TitleBar win={win} />
    <TradeBar win={win} />
    <div className="relative flex">
      <Plot win={win} />
      <PriceScale win={win} />
      <Legend />
    </div>
    <Toolbar tall={win.height < 380} />
  </section>
);

const apps = [
  ['Rechercher', <path d="M3 23l6-7M8.500 9a7 7 0 1 0 14 0 7 7 0 1 0-14 0z" fill="none" stroke="#fff" strokeWidth="2" />],
  ['Vue des tâches', (
    <g fill="none" stroke="#e6e6e6" strokeWidth="1.500">
      <rect x="5" y="9" width="10" height="7" /><path d="M5 4v2h10V4M5 21v-2h10v2M19 4v17" /><path d="M18 9h3v3h-3z" fill="#fff" />
    </g>
  )],
  ['Word', (
    <>
      <path d="M5 1h17l1 22H8z" fill="#e9f0fa" stroke="#6f93cf" />
      <path d="M17 6h4M17 9h4M17 12h4M10 18h11M10 21h11" stroke="#5c85cc" />
      <rect x="1" y="5" width="15" height="13" fill="#2c5cb0" />
      <path d="M4 8l2 7 2.500-6 2.500 6 2-7" fill="none" stroke="#fff" strokeWidth="2" />
    </>
  )],
  ['Bureau', (
    <>
      <path d="M2 3h20v15H2z" fill="#1c7fd0" /><path d="M5 3h14v12H5z" fill="#39b3f2" /><path d="M7 15h10v7H7z" fill="#1365ae" />
    </>
  )],
  ['Imprimante', (
    <>
      <path d="M3 5h13l5 5v9H1v-9z" fill="#e4e4e4" /><path d="M1 12h20v7H1z" fill="#b9b9b9" /><path d="M9 14h14v6H9z" fill="#f5f5f5" stroke="#999" />
    </>
  )],
  ['Spotify', (
    <>
      <circle cx="12" cy="12" r="11" fill="#1ed760" />
      <path d="M5 8.500c5-1.500 10-1 14 1.500M6 12.500c4-1.300 8-.8 12 1.300M7 16c3.500-1 7-.5 10 1.200" fill="none" stroke="#111" strokeWidth="2" strokeLinecap="round" />
    </>
  ), true],
  ['Explorateur', (
    <>
      <path d="M1 3h8l2 3h12v15H1z" fill="#e9a93a" /><path d="M1 8h22v13H1z" fill="#fcd462" /><path d="M6 22v-8h12v8h-3v-5H9v5z" fill="#4b9bd8" />
    </>
  )],
  ['Calculatrice', (
    <>
      <rect x="4" y="1" width="16" height="22" fill="#7f8a94" /><rect x="5.500" y="2.500" width="13" height="5" fill="#5ccdf5" />
      <path d="M6 11h9M6 15h9M6 19h9" stroke="#e8ebee" strokeWidth="3" strokeDasharray="3 1.500" /><path d="M15.500 14h3v7h-3z" fill="#224d86" />
    </>
  )],
  ['Paint', (
    <>
      <path d="M11 4C4 4 1 9 1 14c0 6 6 9 9 7 2-1 0-4 3-5s8 1 8-5-5-7-10-7z" fill="#cfe4f4" stroke="#8fb2cc" />
      <circle cx="6" cy="11" r="2" fill="#e23b3b" /><circle cx="11" cy="8" r="2" fill="#f3b21a" /><circle cx="5" cy="16" r="2" fill="#2f9e44" /><circle cx="16" cy="11" r="2" fill="#2f6fd4" />
      <path d="M22 1l-9 16" stroke="#c98b45" strokeWidth="2.500" />
    </>
  )],
  ['Chrome', (
    <>
      <circle cx="12" cy="12" r="11" fill="#fbc116" />
      <path d="M12 12L2.500 6.500A11 11 0 0 1 21.500 6.500H12z" fill="#e33b2e" />
      <path d="M12 12L2.500 6.500A11 11 0 0 0 11 23l5.500-9z" fill="#2da94f" />
      <circle cx="12" cy="12" r="5.500" fill="#fff" /><circle cx="12" cy="12" r="4.200" fill="#2b7de9" />
    </>
  ), true],
];

const Taskbar = () => (
  <footer className="h-[38px] flex items-stretch bg-[#101011] text-white">
    <button aria-label="Démarrer" className="w-10 pr-1 flex items-center justify-center">
      <svg viewBox="0 0 16 16" className="size-4" fill="#fff"><path d="M0 2.300l7-1v6.200H0zM8 1.100L16 0v7.500H8zM0 8.500h7v6.200l-7-1zM8 8.500h8V16l-8-1.100z" /></svg>
    </button>
    {apps.map(([label, art, open]) => (
      <button key={label} aria-label={label} className="w-[46px] flex flex-col items-center justify-between pt-[7px]">
        <svg viewBox="0 0 24 24" className="size-6">{art}</svg>
        <span className={clsx('w-[38px] h-[2px]', open && 'bg-[#b5a9a9]')} />
      </button>
    ))}
    <button aria-label="ProRealTime" className="w-[46px] flex flex-col items-center justify-between pt-[7px] bg-[#333335]">
      <CandleIcon className="size-[22px]" />
      <span className="w-full h-[2px] bg-[#b5a9a9]" />
    </button>
    <div className="ml-auto pr-[10px] pt-[3px] text-center leading-4">
      <div>21:12</div>
      <div>17/08/2023</div>
    </div>
  </footer>
);

export default function App() {
  return (
    <div className="overflow-hidden bg-white text-[10px] font-['Liberation_Sans',Arial,sans-serif]">
      <main className="-ml-[3px] grid grid-cols-[903fr_900fr]">
        {WINDOWS.map((win, i) => <ChartWindow key={win.symbol} win={win} left={i % 2 === 0} />)}
      </main>
      <Taskbar />
    </div>
  );
}
